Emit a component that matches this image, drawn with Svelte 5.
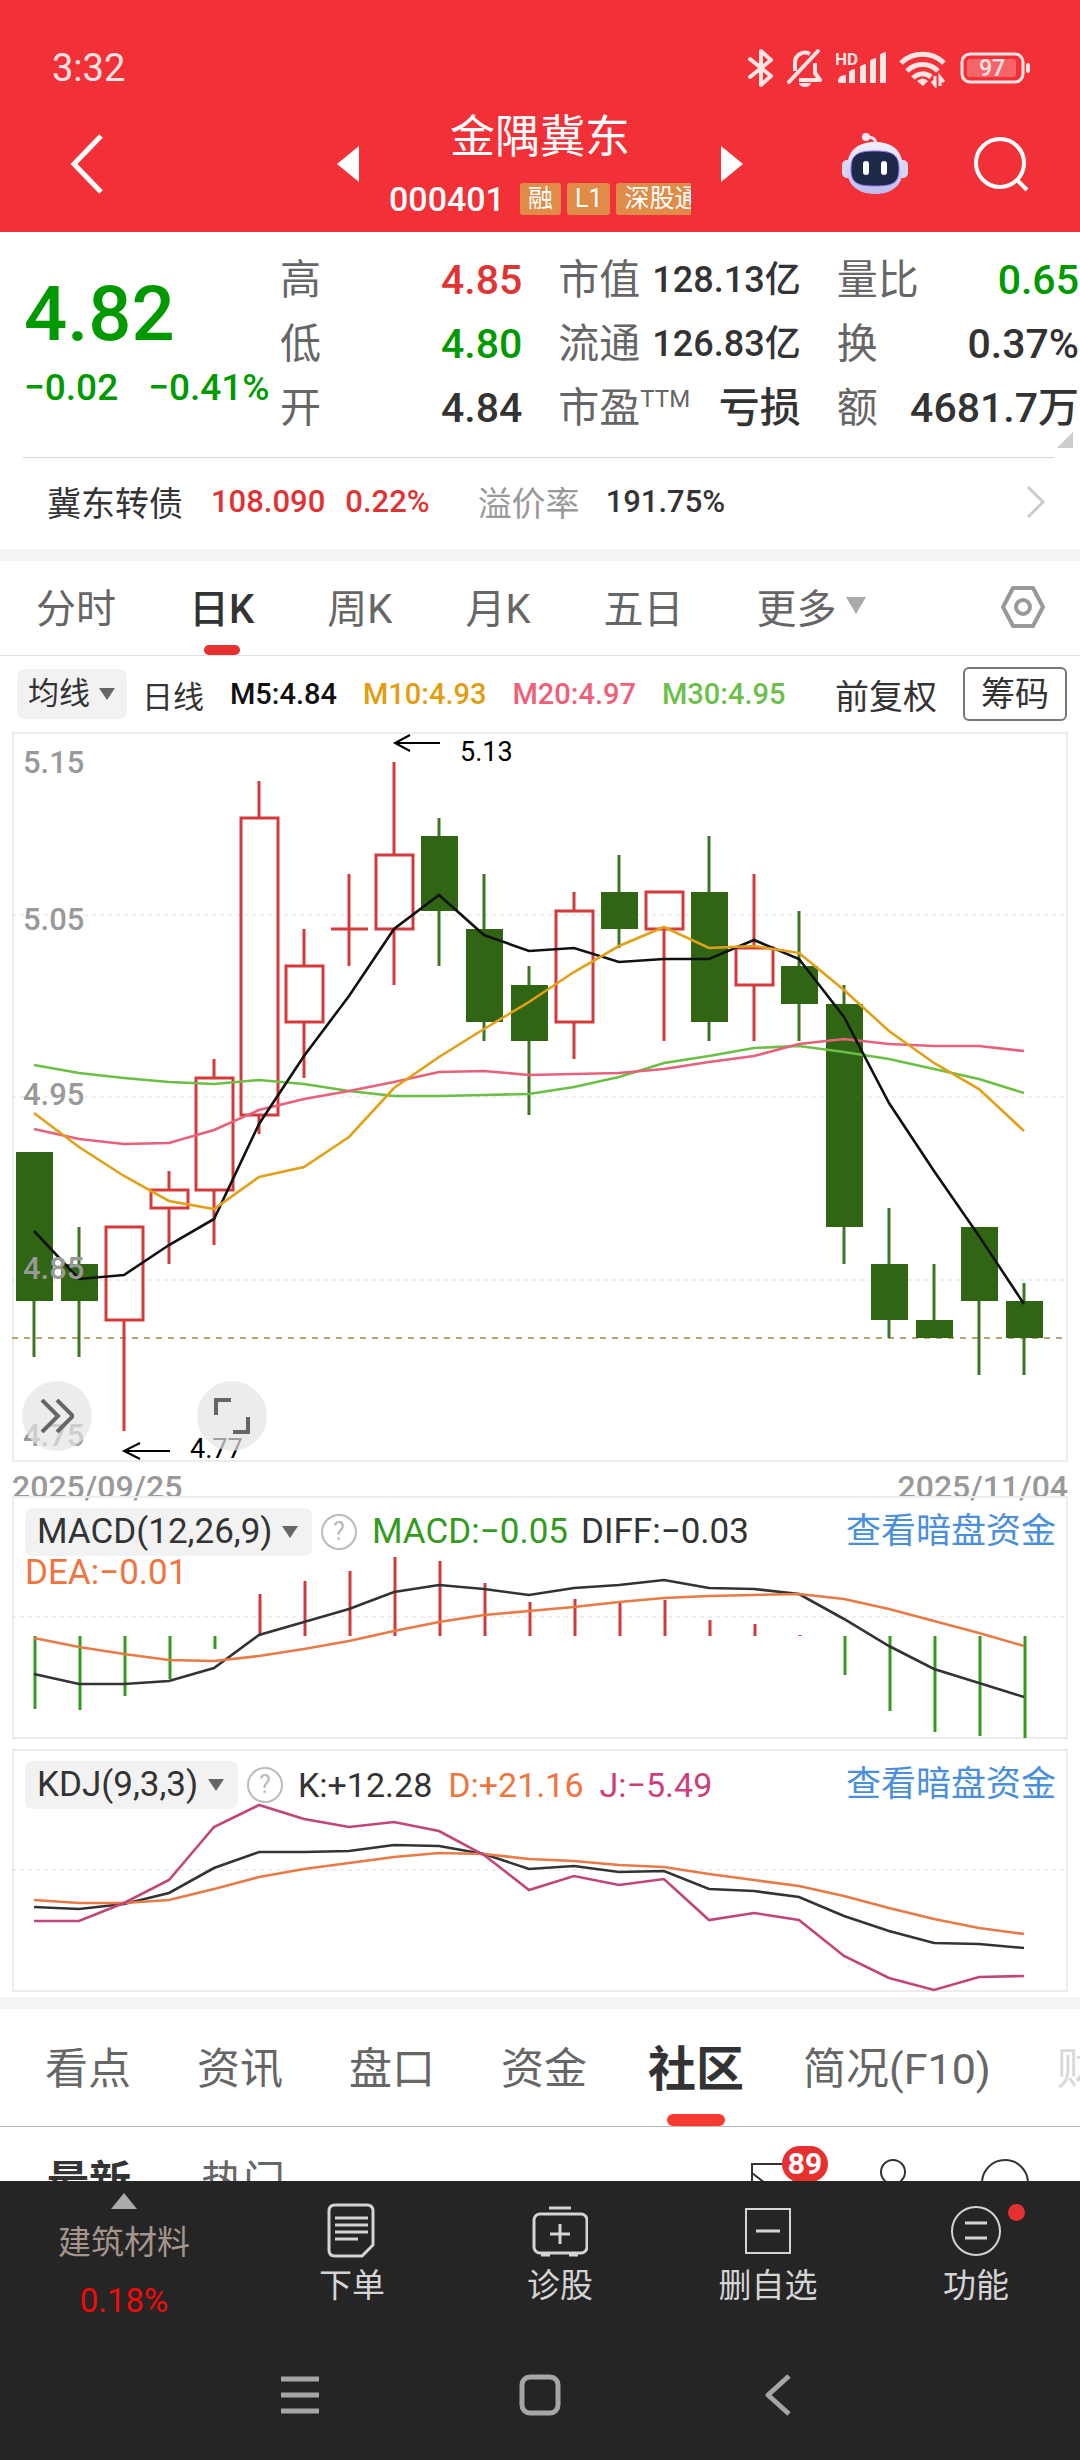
<script lang="ts">
	const STEP = 45;
	const FIRST = 22;
	const BODY = 37;

	// [high, top of body, bottom of body, low, rising]
	const candles: [number, number, number, number, boolean][] = [
		[4.92, 4.92, 4.84, 4.81, false],
		[4.88, 4.86, 4.84, 4.81, false],
		[4.88, 4.88, 4.83, 4.77, true],
		[4.91, 4.9, 4.89, 4.86, true],
		[4.97, 4.96, 4.9, 4.87, true],
		[5.12, 5.1, 4.94, 4.93, true],
		[5.04, 5.02, 4.99, 4.96, true],
		[5.07, 5.04, 5.04, 5.02, true],
		[5.13, 5.08, 5.04, 5.01, true],
		[5.1, 5.09, 5.05, 5.02, false],
		[5.07, 5.04, 4.99, 4.98, false],
		[5.02, 5.01, 4.98, 4.94, false],
		[5.06, 5.05, 4.99, 4.97, true],
		[5.08, 5.06, 5.04, 5.03, false],
		[5.06, 5.06, 5.04, 4.98, true],
		[5.09, 5.06, 4.99, 4.98, false],
		[5.07, 5.03, 5.01, 4.98, true],
		[5.05, 5.02, 5.0, 4.98, false],
		[5.01, 5.0, 4.88, 4.86, false],
		[4.89, 4.86, 4.83, 4.82, false],
		[4.86, 4.83, 4.82, 4.82, false],
		[4.88, 4.88, 4.84, 4.8, false],
		[4.85, 4.84, 4.82, 4.8, false]
	];

	const averages = [
		{ color: '#6bbf45', y: [333, 341, 346, 350, 352, 348, 352, 359, 364, 364, 363, 362, 355, 345, 331, 324, 316, 314, 320, 327, 337, 347, 361] },
		{ color: '#e8607a', y: [397, 407, 412, 411, 398, 378, 367, 359, 350, 340, 339, 343, 342, 341, 337, 330, 324, 312, 307, 312, 314, 314, 319] },
		{ color: '#111', y: [499, 547, 543, 513, 487, 392, 324, 264, 197, 163, 203, 219, 216, 230, 227, 227, 208, 227, 285, 371, 439, 504, 572] },
		{ color: '#e2a017', y: [381, 415, 444, 469, 477, 445, 435, 405, 356, 325, 297, 270, 240, 214, 195, 216, 214, 221, 258, 299, 331, 357, 399] }
	];

	const ZERO = 140;
	const macdBars = [213, 214, 200, 183, 153, 98, 85, 75, 61, 65, 87, 106, 103, 107, 104, 124, 128, 139, 179, 215, 236, 240, 242];
	const macdLines = [
		{ color: '#333', y: [178, 188, 188, 185, 172, 139, 126, 113, 96, 89, 93, 99, 92, 89, 84, 92, 93, 98, 123, 150, 173, 187, 201] },
		{ color: '#e97a45', y: [142, 151, 158, 164, 165, 160, 153, 145, 135, 126, 119, 115, 111, 106, 102, 100, 99, 98, 103, 113, 125, 137, 150] }
	];
	const kdjLines = [
		{ color: '#333', y: [158, 160, 155, 144, 119, 103, 103, 102, 96, 97, 105, 120, 117, 123, 122, 140, 142, 148, 167, 182, 194, 195, 199] },
		{ color: '#e97a45', y: [151, 154, 154, 151, 140, 128, 120, 114, 108, 104, 105, 110, 112, 116, 118, 125, 131, 137, 147, 159, 170, 179, 185] },
		{ color: '#c24579', y: [172, 172, 154, 131, 78, 56, 70, 78, 73, 82, 106, 141, 127, 136, 130, 171, 164, 171, 207, 229, 241, 228, 227] }
	];

	const stats = [
		[
			{ label: '高', value: '4.85', tone: 'up' },
			{ label: '低', value: '4.80', tone: 'down' },
			{ label: '开', value: '4.84', tone: '' }
		],
		[
			{ label: '市值', value: '128.13亿', tone: 'tight' },
			{ label: '流通', value: '126.83亿', tone: 'tight' },
			{ label: '市盈', sup: 'TTM', value: '亏损', tone: '' }
		],
		[
			{ label: '量比', value: '0.65', tone: 'down' },
			{ label: '换', value: '0.37%', tone: '' },
			{ label: '额', value: '4681.7万', tone: '' }
		]
	];

	const periods = ['分时', '日K', '周K', '月K', '五日'];
	const sections = ['看点', '资讯', '盘口', '资金', '社区', '简况(F10)', '财务'];

	let period = $state('日K');
	let section = $state('社区');

	const x = (i: number) => FIRST + i * STEP;
	const priceY = (p: number) => Math.round(30 + (5.13 - p) * 1859);
	const points = (ys: number[]) => ys.map((y, i) => `${x(i)},${y}`).join(' ');
</script>

{#snippet caret()}
	<svg class="caret" viewBox="0 0 16 12"><path d="M0 0h16L8 12z" fill="currentColor" /></svg>
{/snippet}

{#snippet help()}
	<button type="button" class="help" aria-label="说明">?</button>
{/snippet}

<div class="app">
	<header>
		<div class="status">
			<span class="clock">3:32</span>
			<svg width="26" height="40" viewBox="0 0 26 40" fill="none" stroke="currentColor" stroke-width="4" stroke-linejoin="round" stroke-linecap="round">
				<path d="M2 11l21 17-10 9V3l10 9L2 29" />
			</svg>
			<svg width="36" height="40" viewBox="0 0 36 40" fill="none" stroke="currentColor" stroke-width="4">
				<path d="M2 34L31 3" stroke-linecap="round" />
				<path d="M8 23V15a10 10 0 0 1 15-9M28 15v10l5 7H12" stroke-linejoin="round" />
				<path d="M12 35h12a6 4 0 0 1-12 0z" fill="currentColor" stroke="none" />
			</svg>
			<svg width="50" height="40" viewBox="0 0 50 40" fill="currentColor">
				<text x="-1" y="17" font-size="17" font-weight="700">HD</text>
				<path d="M2 34c0-4 2-7 8-7v8H4q-2 0-2-1zM13 24q1-2 6-3v14h-6zM24 19q1-2 6-3v19h-6zM34 13q1-2 6-3v25h-6zM44 7q1-2 6-3v31h-6z" />
			</svg>
			<svg width="48" height="40" viewBox="0 0 48 40" fill="none" stroke="currentColor" stroke-width="5">
				<path d="M2 15a31 31 0 0 1 43 0" />
				<path d="M8 23a22 22 0 0 1 31 0" />
				<path d="M14 30a13 13 0 0 1 18-1" />
				<path d="M18 33q6-5 11 0l-5 5z" fill="currentColor" stroke="none" />
				<path d="M36 28v9l-3-4M41 38v-9l4 5" stroke-width="3" />
			</svg>
			<svg width="70" height="40" viewBox="0 0 70 40" fill="none">
				<rect x="2" y="6" width="61" height="28" rx="8" stroke="currentColor" stroke-width="3" />
				<rect x="7" y="11" width="49" height="18" rx="3" fill="#fff" opacity="0.25" />
				<rect x="66" y="15" width="4" height="10" rx="2" fill="currentColor" />
				<text x="32" y="28" text-anchor="middle" font-size="23" font-weight="500" fill="currentColor">97</text>
			</svg>
		</div>
		<div class="titlebar">
			<button type="button" class="back" aria-label="返回">
				<svg width="34" height="60" viewBox="0 0 34 60" fill="none" stroke="currentColor" stroke-width="5"><path d="M31 2L4 30l27 28" /></svg>
			</button>
			<div class="stock">
				<button type="button" aria-label="上一只">
					<svg width="22" height="36" viewBox="0 0 22 36"><path d="M22 0v36L0 18z" fill="currentColor" /></svg>
				</button>
				<div class="name">
					<h1>金隅冀东</h1>
					<div class="code">
						<span>000401</span>
						<small>融</small>
						<small>L1</small>
						<small>深股通</small>
					</div>
				</div>
				<button type="button" aria-label="下一只">
					<svg width="22" height="36" viewBox="0 0 22 36"><path d="M0 0v36l22-18z" fill="currentColor" /></svg>
				</button>
			</div>
			<div class="actions">
				<button type="button" aria-label="助手">
					<svg width="68" height="62" viewBox="0 0 68 62">
						<defs>
							<linearGradient id="shell" x1="0" y1="0" x2="0" y2="1">
								<stop offset="0" stop-color="#f3f0fc" />
								<stop offset="1" stop-color="#bdb9ef" />
							</linearGradient>
						</defs>
						<path d="M25 4q10-1 10 8" fill="none" stroke="#e4dff5" stroke-width="3" />
						<circle cx="25" cy="4" r="4" fill="#eeeafa" />
						<rect x="1" y="27" width="12" height="18" rx="5" fill="#d8d5f4" />
						<rect x="55" y="27" width="12" height="18" rx="5" fill="#d8d5f4" />
						<path d="M34 9c18 0 28 9 28 27 0 17-12 25-28 25S6 53 6 36C6 18 16 9 34 9z" fill="url(#shell)" />
						<path d="M34 18c18 0 24 4 24 18s-6 17-24 17-24-3-24-17 6-18 24-18z" fill="#1e2949" stroke="#8b6ff0" stroke-width="1" />
						<rect x="22" y="28" width="6" height="14" rx="3" fill="#fff" />
						<rect x="40" y="28" width="6" height="14" rx="3" fill="#fff" />
					</svg>
				</button>
				<button type="button" aria-label="搜索">
					<svg width="56" height="56" viewBox="0 0 56 56" fill="none" stroke="currentColor" stroke-width="4">
						<circle cx="27" cy="27" r="24" />
						<path d="M44 44l10 10" />
					</svg>
				</button>
			</div>
		</div>
	</header>

	<section class="quote">
		<div class="price">
			<strong>4.82</strong>
			<div class="change"><span>−0.02</span><span>−0.41%</span></div>
		</div>
		<div class="stats">
			{#each stats as column}
				<div>
					{#each column as item}
						<div class="stat">
							<span class="label">{item.label}{#if item.sup}<sup>{item.sup}</sup>{/if}</span>
							<span class="value {item.tone}">{item.value}</span>
						</div>
					{/each}
				</div>
			{/each}
		</div>
		<svg class="corner" width="16" height="16" viewBox="0 0 16 16"><path d="M16 0v16H0z" fill="#ccc" /></svg>
	</section>

	<a class="bond" href="#bond">
		<span>冀东转债</span>
		<span class="num up first">108.090</span>
		<span class="num up">0.22%</span>
		<span class="muted">溢价率</span>
		<span class="num rate">191.75%</span>
		<svg width="20" height="34" viewBox="0 0 20 34" fill="none" stroke="#ccc" stroke-width="3"><path d="M2 2l15 15L2 32" /></svg>
	</a>

	<div class="band"></div>

	<nav class="periods">
		{#each periods as item}
			<button type="button" class:active={item === period} onclick={() => (period = item)}>{item}</button>
		{/each}
		<button type="button" class="more">更多 <svg width="20" height="17" viewBox="0 0 20 17"><path d="M0 0h20L10 17z" fill="#aaa" /></svg></button>
		<button type="button" class="settings" aria-label="设置">
			<svg width="46" height="44" viewBox="0 0 46 44" fill="none" stroke="#999" stroke-width="4" stroke-linejoin="round">
				<path d="M13 3h20l10 19-10 19H13L3 22z" />
				<circle cx="23" cy="22" r="7" />
			</svg>
		</button>
	</nav>

	<div class="legend">
		<label class="chip">
			<select aria-label="指标"><option>均线</option></select>
			{@render caret()}
		</label>
		<span class="day">日线</span>
		<span class="ma m5">M5:4.84</span>
		<span class="ma m10">M10:4.93</span>
		<span class="ma m20">M20:4.97</span>
		<span class="ma m30">M30:4.95</span>
		<button type="button" class="adjust">前复权</button>
		<button type="button" class="boxed">筹码</button>
	</div>

	<div class="chart">
		<svg viewBox="0 0 1056 730">
			<rect x="1" y="1" width="1054" height="728" fill="none" stroke="#ececec" stroke-width="2" />
			{#each [183, 365, 548] as y}
				<line x1="0" x2="1056" y1={y} y2={y} stroke="#e0e0e0" stroke-dasharray="4 4" />
			{/each}
			<line x1="0" x2="1056" y1="606" y2="606" stroke="#bba56e" stroke-width="2" stroke-dasharray="6 6" />
			{#each candles as [high, top, bottom, low, rising], i}
				{#if rising}
					<g stroke="#d43a3a" stroke-width="3" fill="none">
						<path d="M{x(i)} {priceY(high)}V{priceY(top)}M{x(i)} {priceY(bottom)}V{priceY(low)}" />
						{#if top === bottom}
							<path d="M{x(i) - 18} {priceY(top)}h{BODY}" />
						{:else}
							<rect x={x(i) - 18} y={priceY(top)} width={BODY} height={priceY(bottom) - priceY(top)} />
						{/if}
					</g>
				{:else}
					<line x1={x(i)} x2={x(i)} y1={priceY(high)} y2={priceY(low)} stroke="#3c7526" stroke-width="3" />
					<rect x={x(i) - 18} y={priceY(top)} width={BODY} height={priceY(bottom) - priceY(top)} fill="#306514" />
				{/if}
			{/each}
			{#each averages as line}
				<polyline class="line" points={points(line.y)} stroke={line.color} />
			{/each}
			<g class="scale">
				<text x="11" y="41">5.15</text>
				<text x="11" y="198">5.05</text>
				<text x="11" y="373">4.95</text>
				<text x="11" y="547">4.85</text>
				<text x="11" y="714">4.75</text>
			</g>
			<g fill="none" stroke="#000" stroke-width="2">
				<path d="M428 11H383M398 3l-15 8 15 8" />
				<path d="M158 719h-46M128 711l-16 8 16 8" />
			</g>
			<g class="extreme">
				<text x="448" y="29">5.13</text>
				<text x="178" y="726">4.77</text>
			</g>
		</svg>
		<div class="tools">
			<button type="button" aria-label="展开">
				<svg width="34" height="34" viewBox="0 0 34 34" fill="none" stroke="#666" stroke-width="4"><path d="M2 1l16 16L2 33M17 1l16 16-16 16" /></svg>
			</button>
			<button type="button" aria-label="全屏">
				<svg width="36" height="36" viewBox="0 0 36 36" fill="none" stroke="#666" stroke-width="4"><path d="M2 17V2h15M34 19v15H19" /></svg>
			</button>
		</div>
	</div>
	<div class="dates"><span>2025/09/25</span><span>2025/11/04</span></div>

	<div class="panel">
		<svg viewBox="0 0 1056 243">
			<rect x="1" y="1" width="1054" height="241" fill="none" stroke="#ececec" stroke-width="2" />
			<line x1="0" x2="1056" y1="121" y2="121" stroke="#ddd" stroke-dasharray="4 4" />
			{#each macdBars as end, i}
				<line x1={x(i) + 1} x2={x(i) + 1} y1={ZERO} y2={end} stroke={end > ZERO ? '#349a20' : '#d03a3a'} stroke-width="3" />
			{/each}
			{#each macdLines as line}
				<polyline class="line" points={points(line.y)} stroke={line.color} />
			{/each}
		</svg>
		<div class="readout">
			<label class="chip">
				<select aria-label="副图一"><option>MACD(12,26,9)</option></select>
				{@render caret()}
			</label>
			{@render help()}
			<span class="macd">MACD:−0.05</span>
			<span>DIFF:−0.03</span>
			<a href="#fund">查看暗盘资金</a>
			<span class="wrap orange">DEA:−0.01</span>
		</div>
	</div>

	<div class="panel">
		<svg viewBox="0 0 1056 243">
			<rect x="1" y="1" width="1054" height="241" fill="none" stroke="#ececec" stroke-width="2" />
			<line x1="0" x2="1056" y1="121" y2="121" stroke="#ddd" stroke-dasharray="4 4" />
			{#each kdjLines as line}
				<polyline class="line" points={points(line.y)} stroke={line.color} />
			{/each}
		</svg>
		<div class="readout kdj">
			<label class="chip">
				<select aria-label="副图二"><option>KDJ(9,3,3)</option></select>
				{@render caret()}
			</label>
			{@render help()}
			<span>K:+12.28</span>
			<span class="orange">D:+21.16</span>
			<span class="pink">J:−5.49</span>
			<a href="#fund">查看暗盘资金</a>
		</div>
	</div>

	<div class="band lower"></div>

	<nav class="sections">
		{#each sections as item}
			<button type="button" class:active={item === section} onclick={() => (section = item)}>{item}</button>
		{/each}
	</nav>

	<div class="feed">
		<button type="button" class="latest">最新</button>
		<button type="button">热门</button>
		<div class="feed-icons">
			<button type="button" class="mail" aria-label="消息">
				<svg width="54" height="40" viewBox="0 0 54 40" fill="none" stroke="#333" stroke-width="2"><path d="M1 1h52v38H1zM1 10l26 20L53 10" /></svg>
				<span class="badge">89</span>
			</button>
			<button type="button" aria-label="我的">
				<svg width="48" height="50" viewBox="0 0 48 50" fill="none" stroke="#333" stroke-width="2"><circle cx="24" cy="13" r="12" /><path d="M2 49c0-16 8-23 22-23s22 7 22 23" /></svg>
			</button>
			<button type="button" aria-label="搜帖">
				<svg width="48" height="50" viewBox="0 0 48 50" fill="none" stroke="#333" stroke-width="2"><circle cx="24" cy="24" r="23" /><path d="M40 40l8 8" /></svg>
			</button>
		</div>
	</div>

	<footer>
		<div class="dock">
			<button type="button" class="industry">
				<svg width="26" height="16" viewBox="0 0 26 16"><path d="M13 0l13 16H0z" fill="#aaa" /></svg>
				<span>建筑材料</span>
				<b>0.18%</b>
			</button>
			<button type="button">
				<svg width="56" height="56" viewBox="0 0 56 56" fill="none" stroke="#d4d4d4" stroke-width="3">
					<path d="M11 2h32q6 0 6 6v34L38 53H11q-6 0-6-6V8q0-6 6-6z" />
					<path d="M11 15h33M11 22h33M11 29h33M11 36h23" />
				</svg>
				<span>下单</span>
			</button>
			<button type="button">
				<svg width="56" height="56" viewBox="0 0 56 56" fill="none" stroke="#d4d4d4" stroke-width="3">
					<rect x="2" y="11" width="53" height="39" rx="6" />
					<path d="M17 5h22M28 21v20M18 31h20M9 52h9M37 52h9" />
				</svg>
				<span>诊股</span>
			</button>
			<button type="button">
				<svg width="56" height="56" viewBox="0 0 56 56" fill="none" stroke="#d4d4d4" stroke-width="2">
					<rect x="6" y="6" width="44" height="44" />
					<path d="M16 28h24" stroke-width="3" />
				</svg>
				<span>删自选</span>
			</button>
			<button type="button">
				<svg width="56" height="56" viewBox="0 0 56 56" fill="none" stroke="#d4d4d4" stroke-width="2">
					<circle cx="28" cy="28" r="24" />
					<path d="M17 20h22M17 35h22" stroke-width="3" />
				</svg>
				<i class="dot"></i>
				<span>功能</span>
			</button>
		</div>
		<div class="system">
			<button type="button" aria-label="菜单">
				<svg width="42" height="42" viewBox="0 0 42 42" stroke="#a6a6a6" stroke-width="5"><path d="M2 5h38M2 21h38M2 37h38" /></svg>
			</button>
			<button type="button" aria-label="主页">
				<svg width="42" height="42" viewBox="0 0 42 42" fill="none" stroke="#a6a6a6" stroke-width="5"><rect x="3" y="3" width="36" height="36" rx="8" /></svg>
			</button>
			<button type="button" aria-label="后退">
				<svg width="42" height="42" viewBox="0 0 42 42" fill="none" stroke="#a6a6a6" stroke-width="5" stroke-linejoin="round"><path d="M30 2L9 21l21 19" /></svg>
			</button>
		</div>
	</footer>
</div>

<style>
	:global(body) {
		margin: 0;
		background: #fff;
	}

	.app {
		font-family: Roboto, 'Noto Sans CJK SC', sans-serif;
		color: #333;
		overflow: hidden;
	}

	button,
	select {
		font: inherit;
		color: inherit;
		background: none;
		border: none;
		margin: 0;
		padding: 0;
		cursor: pointer;
	}

	svg {
		display: block;
		flex-shrink: 0;
	}

	a {
		color: inherit;
		text-decoration: none;
	}

	span {
		white-space: nowrap;
	}

	.up {
		color: #e03434;
	}

	.down {
		color: #009a00;
	}

	.orange {
		color: #f0743e;
	}

	.pink {
		color: #cc3f7c;
	}

	/* header */
	header {
		background: #f23037;
		color: #fff;
		padding-top: 40px;
	}

	.status {
		display: flex;
		align-items: center;
		gap: 13px;
		height: 56px;
		padding: 0 50px 0 52px;
		color: #ffe4e4;
	}

	.clock {
		font-size: 38px;
		line-height: 56px;
		margin-right: auto;
	}

	.titlebar {
		display: grid;
		grid-template-columns: 1fr auto 1fr;
		align-items: center;
		height: 136px;
	}

	.back {
		justify-self: start;
		padding-left: 70px;
	}

	.stock {
		display: flex;
		align-items: center;
		gap: 30px;
	}

	.name {
		width: 302px;
		padding-top: 14px;
	}

	h1 {
		margin: 0;
		font-size: 45px;
		font-weight: 400;
		line-height: 56px;
		text-align: center;
	}

	.code {
		display: flex;
		align-items: center;
		gap: 6px;
		overflow: hidden;
		font-size: 34px;
		line-height: 66px;
		font-weight: 500;
	}

	.code span {
		margin-right: 9px;
	}

	.code small {
		flex-shrink: 0;
		padding: 0 8px;
		border-radius: 3px;
		background: #e08b48;
		font-size: 25px;
		font-weight: 400;
		line-height: 32px;
	}

	.actions {
		display: flex;
		justify-content: flex-end;
		align-items: center;
		gap: 64px;
		padding-right: 51px;
	}

	/* quote */
	.quote {
		position: relative;
		display: grid;
		grid-template-columns: 256px 1fr;
		padding: 16px 1px 17px 24px;
	}

	.price {
		color: #009a00;
		padding-top: 17px;
	}

	.price strong {
		display: block;
		font-size: 76px;
		font-weight: 500;
		line-height: 98px;
	}

	.change {
		display: flex;
		gap: 30px;
		font-size: 37px;
		font-weight: 500;
		line-height: 50px;
	}

	.stats {
		display: grid;
		grid-template-columns: repeat(3, 1fr);
		gap: 36px;
	}

	.stat {
		display: flex;
		justify-content: space-between;
		font-size: 41px;
		line-height: 64px;
	}

	.stat .label {
		color: #666;
	}

	.stat .value {
		font-weight: 500;
	}

	.stat .tight {
		font-size: 36px;
	}

	sup {
		font-size: 24px;
		line-height: 1;
	}

	.corner {
		position: absolute;
		right: 7px;
		bottom: 9px;
	}

	.bond {
		display: flex;
		align-items: center;
		height: 87px;
		margin: 0 26px 0 23px;
		padding: 0 8px 4px 24px;
		border-top: 1px solid #d8d8d8;
		font-size: 34px;
	}

	.num {
		font-size: 31px;
		font-weight: 500;
	}

	.first {
		margin: 0 20px 0 28px;
	}

	.muted {
		margin: 0 26px 0 48px;
		color: #999;
	}

	.bond svg {
		margin-left: auto;
	}

	.band {
		height: 12px;
		background: #f4f4f4;
	}

	/* period tabs */
	.periods {
		display: flex;
		align-items: stretch;
		height: 94px;
		padding: 0 34px 0 36px;
		border-bottom: 1px solid #e0e0e0;
		gap: 73px;
		font-size: 40px;
		color: #666;
	}

	.periods button,
	.sections button {
		position: relative;
		padding-bottom: 5px;
		white-space: nowrap;
	}

	.periods .active {
		color: #333;
		font-weight: 500;
	}

	.periods .active::after {
		content: '';
		position: absolute;
		left: 50%;
		bottom: 0;
		width: 36px;
		height: 10px;
		margin-left: -18px;
		border-radius: 5px;
		background: #e73030;
	}

	.periods .more {
		display: flex;
		align-items: center;
		gap: 9px;
	}

	.periods .settings {
		margin-left: auto;
		padding-bottom: 2px;
	}

	/* moving averages */
	.legend {
		display: flex;
		align-items: center;
		height: 76px;
		padding: 0 13px 0 17px;
		font-size: 31px;
	}

	.chip {
		display: flex;
		align-items: center;
		gap: 9px;
		height: 50px;
		padding: 0 12px 0 11px;
		border-radius: 7px;
		background: #f2f2f2;
	}

	.chip select {
		appearance: none;
		line-height: 48px;
		height: 48px;
	}

	.caret {
		width: 16px;
		height: 12px;
		color: #666;
	}

	.day {
		margin-left: 15px;
	}

	.ma {
		margin-left: 26px;
		font-size: 29px;
		font-weight: 500;
	}

	.m5 {
		color: #111;
	}

	.m10 {
		color: #e39d10;
	}

	.m20 {
		color: #ef6078;
	}

	.m30 {
		color: #6cc04a;
	}

	.adjust {
		margin: 0 26px 0 auto;
		font-size: 34px;
	}

	.boxed {
		width: 104px;
		height: 54px;
		border: 2px solid #777;
		border-radius: 6px;
		font-size: 34px;
		line-height: 46px;
	}

	/* charts */
	.chart,
	.panel {
		display: grid;
		margin: 0 12px;
	}

	.chart > *,
	.panel > * {
		grid-area: 1 / 1;
	}

	.chart > svg,
	.panel > svg {
		width: 100%;
	}

	.panel + .panel {
		margin-top: 10px;
	}

	.line {
		fill: none;
		stroke-width: 2.6;
	}

	.scale {
		font-size: 31px;
		font-weight: 500;
		fill: #999;
	}

	.extreme {
		font-size: 27px;
		fill: #000;
	}

	.tools {
		display: flex;
		align-self: end;
		gap: 105px;
		padding: 0 0 11px 10px;
	}

	.tools button {
		display: grid;
		place-items: center;
		width: 70px;
		height: 70px;
		border-radius: 50%;
		background: rgba(228, 228, 228, 0.7);
	}

	.dates {
		display: flex;
		justify-content: space-between;
		height: 34px;
		margin: 0 12px;
		font-size: 32px;
		line-height: 50px;
		font-weight: 500;
		color: #999;
	}

	.readout {
		display: flex;
		flex-wrap: wrap;
		align-content: flex-start;
		align-items: center;
		padding: 12px 12px 0 13px;
		font-size: 35px;
		line-height: 34px;
	}

	.readout .chip {
		height: 48px;
		padding: 0 14px 0 12px;
	}

	.help {
		width: 36px;
		height: 36px;
		margin: 0 15px 0 9px;
		border: 2px solid #bbb;
		border-radius: 50%;
		font-size: 25px;
		line-height: 30px;
		color: #bbb;
	}

	.readout span {
		margin-right: 13px;
	}

	.kdj span {
		margin-right: 16px;
		font-size: 34px;
	}

	.readout .macd {
		color: #349a20;
	}

	.readout a {
		margin-left: auto;
		color: #4a8fdc;
	}

	.readout .wrap {
		flex-basis: 100%;
	}

	.lower {
		margin-top: 5px;
	}

	/* section tabs */
	.sections {
		display: flex;
		gap: 66px;
		height: 117px;
		padding-left: 45px;
		border-bottom: 1px solid #bbb;
		font-size: 43px;
		color: #666;
		overflow: hidden;
	}

	.sections button:last-child {
		opacity: 0.25;
	}

	.sections .active {
		margin: 0 -7px 0 -5px;
		font-size: 48px;
		font-weight: 700;
		color: #333;
	}

	.sections .active::after {
		content: '';
		position: absolute;
		left: 50%;
		bottom: 0;
		width: 58px;
		height: 12px;
		margin-left: -29px;
		border-radius: 6px;
		background: #fb3b31;
	}

	/* community feed, only its first strip shows above the dock */
	.feed {
		display: flex;
		align-items: flex-start;
		gap: 70px;
		height: 54px;
		padding-left: 47px;
		font-size: 42px;
		line-height: 62px;
		color: #666;
		overflow: hidden;
	}

	.feed > button {
		padding-top: 24px;
	}

	.feed .latest {
		color: #333;
		font-weight: 700;
	}

	.feed-icons {
		display: flex;
		gap: 64px;
		margin-left: auto;
		padding: 32px 51px 0 0;
	}

	.mail {
		position: relative;
		align-self: flex-start;
		padding-top: 4px;
	}

	.badge {
		position: absolute;
		left: 31px;
		top: -13px;
		width: 46px;
		height: 36px;
		border-radius: 18px;
		background: #e73030;
		color: #fff;
		font-size: 30px;
		font-weight: 700;
		line-height: 36px;
	}

	/* bottom bars */
	footer {
		background: #252525;
		color: #d4d4d4;
		padding-bottom: 44px;
	}

	.dock {
		display: grid;
		grid-template-columns: 248fr 208fr 208fr 208fr 208fr;
		height: 150px;
		font-size: 33px;
		line-height: 48px;
	}

	.dock button {
		position: relative;
		display: flex;
		flex-direction: column;
		align-items: center;
		padding-top: 22px;
	}

	.dock button span {
		margin-top: 3px;
	}

	.dock .industry {
		padding-top: 12px;
		color: #a3948c;
	}

	.dock .industry span {
		margin-top: 10px;
	}

	.industry b {
		margin-top: 10px;
		font-weight: 400;
		color: #f00a0a;
	}

	.dot {
		position: absolute;
		left: calc(50% + 32px);
		top: 23px;
		width: 17px;
		height: 17px;
		border-radius: 50%;
		background: #e73030;
	}

	.system {
		display: flex;
		justify-content: center;
		gap: 198px;
		padding-top: 43px;
	}
</style>
